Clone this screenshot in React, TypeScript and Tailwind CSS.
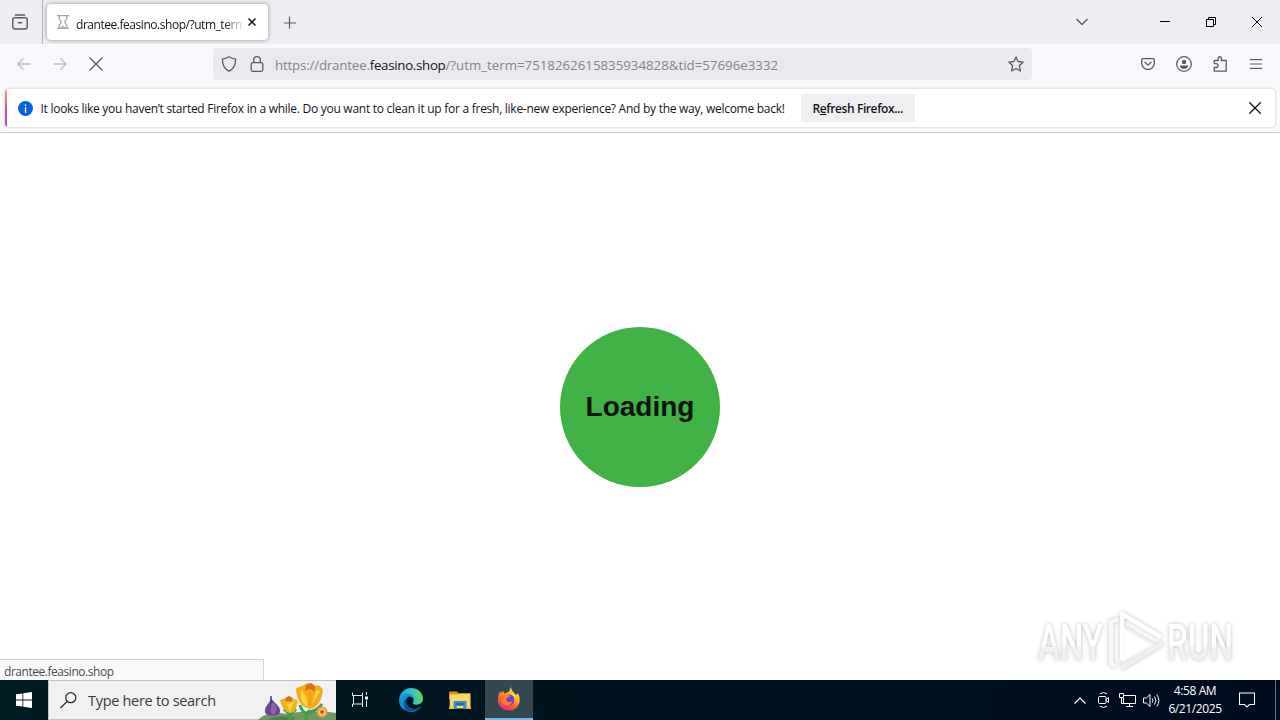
import type { ReactNode } from "react";

function IconButton({ children, className = "" }: { children: ReactNode; className?: string }) {
  return <button className={`flex h-8 w-9 items-center justify-center ${className}`}>{children}</button>;
}

function TabStrip() {
  return (
    <div className="flex h-11 shrink-0 items-center bg-[#eeedf2]">
      <div className="flex h-full w-[43px] items-center justify-center border-r border-[#b5b5bb] pr-0.5">
        <svg width="16" height="16" viewBox="0 0 16 16" fill="none" stroke="#5b5b66" strokeWidth="1.4" strokeLinecap="round">
          <path d="M3.2 1h9.6" />
          <rect x=".8" y="3.7" width="14.4" height="11.3" rx="2" />
          <path d="M6.3 8.7h3.4" />
        </svg>
      </div>
      <div className="ml-1 flex h-9 w-[221px] items-center rounded bg-white pl-2 shadow-[0_0_4px_rgba(0,0,0,0.4)]">
        <svg width="16" height="16" viewBox="0 0 16 16" fill="none" stroke="#a5a5a9" strokeWidth="1.3">
          <path d="M2 1.6h12M2 14.4h12M4.2 1.6v3.2L6.400 8l-2.200 3.200v3.200M11.800 1.600v3.200L9.600 8l2.200 3.200v3.200" />
          <path d="M5.500 14L8 12.500l2.500 1.500" />
        </svg>
        <div className="ml-[5px] w-[168px] overflow-hidden pt-px whitespace-nowrap [mask-image:linear-gradient(to_left,transparent,black_20px)]">
          <span className="text-[12px] tracking-[-0.46px] text-[#15141a]">drantee.feasino.shop/?utm_term=</span>
        </div>
        <svg className="ml-1" width="8" height="8" viewBox="0 0 8 8" stroke="#15141a" strokeWidth="1.5">
          <path d="M.5.5l7 7M7.5.5l-7 7" />
        </svg>
      </div>
      <svg className="ml-4" width="12" height="13" viewBox="0 0 12 13" stroke="#5b5b66" strokeWidth="1.2">
        <path d="M5.500.5v12M-.5 7h12.500" />
      </svg>
      <svg className="ml-auto" width="12" height="8" viewBox="0 0 12 8" fill="none" stroke="#5b5b66" strokeWidth="1.3">
        <path d="M.5 1L6 6.5 11.5 1" />
      </svg>
      <div className="ml-[54px] flex text-black">
        <div className="flex h-11 w-[46px] items-center justify-center">
          <svg width="10" height="10" viewBox="0 0 10 10" stroke="currentColor">
            <path d="M0 4.5h10" />
          </svg>
        </div>
        <div className="flex h-11 w-[46px] items-center justify-center">
          <svg width="10" height="10" viewBox="0 0 10 10" fill="none" stroke="currentColor">
            <path d="M.5 2.5h7v7h-7zM2.5 2.5v-2h7v7h-2" />
          </svg>
        </div>
        <div className="flex h-11 w-[46px] items-center justify-center">
          <svg width="10" height="10" viewBox="0 0 10 10" stroke="currentColor">
            <path d="M0 0l10 10M10 0L0 10" />
          </svg>
        </div>
      </div>
    </div>
  );
}

function NavBar() {
  return (
    <div className="flex h-10 shrink-0 items-center bg-[#f8f8fc] px-1.5">
      <IconButton>
        <svg width="14" height="12" viewBox="0 0 14 12" fill="none" stroke="#bdbdc2" strokeWidth="1.3" strokeLinecap="round" strokeLinejoin="round">
          <path d="M13.3 6H.8M6 .8L.8 6 6 11.2" />
        </svg>
      </IconButton>
      <IconButton>
        <svg width="14" height="12" viewBox="0 0 14 12" fill="none" stroke="#bdbdc2" strokeWidth="1.3" strokeLinecap="round" strokeLinejoin="round">
          <path d="M.7 6h12.5M8 .8L13.2 6 8 11.2" />
        </svg>
      </IconButton>
      <IconButton>
        <svg width="14" height="14" viewBox="0 0 14 14" stroke="#5b5b66" strokeWidth="1.25" strokeLinecap="round">
          <path d="M1 1l12 12M13 1L1 13" />
        </svg>
      </IconButton>
      <div className="ml-[99px] flex h-8 w-[819px] items-center rounded bg-[#eae9ee] px-2">
        <svg width="16" height="16" viewBox="0 0 16 16" fill="none" stroke="#5b5b66" strokeWidth="1.3" strokeLinejoin="round">
          <path d="M8 .8c2 1.3 4 2 6.6 2.3C14.7 9 12.6 13.2 8 15.2 3.4 13.2 1.3 9 1.4 3.1 4 2.8 6 2.1 8 .8z" />
        </svg>
        <svg className="ml-3" width="16" height="16" viewBox="0 0 16 16" fill="none" stroke="#5b5b66" strokeWidth="1.3">
          <rect x="2.2" y="6.7" width="11.6" height="8.6" rx="1.5" />
          <path d="M4.700 6.700V4a3.300 3.300 0 0 1 6.600 0v2.700" />
        </svg>
        <div className="ml-2.5 pt-0.5 text-[13.3px] leading-5 tracking-[-0.01px] whitespace-nowrap text-[#84848a]">
          <span className="tracking-[-0.18px]">https://drantee.</span>
          <span className="tracking-[-0.3px] text-[#15141a]">feasino.shop</span>
          /?utm_term=7518262615835934828&amp;tid=57696e3332
        </div>
        <svg className="ml-auto" width="16" height="16" viewBox="0 0 16 16" fill="none" stroke="#5b5b66" strokeWidth="1.3" strokeLinejoin="round">
          <path d="M8 .9l2.100 4.600 5.100.6-3.800 3.500 1 5.400L8 12.500l-4.400 2.500 1-5.400L.8 6.100l5.100-.6z" />
        </svg>
      </div>
      <div className="ml-auto flex">
        <IconButton>
          <svg width="14" height="12" viewBox="0 0 14 12" fill="none" stroke="#5b5b66" strokeWidth="1.3" strokeLinecap="round" strokeLinejoin="round">
            <path d="M2 .7h10a1.300 1.300 0 0 1 1.300 1.300v3.200a6.300 6.300 0 0 1-12.600 0V2A1.300 1.300 0 0 1 2 .7z" />
            <path d="M3.900 4.200L7 7.100l3.100-2.900" />
          </svg>
        </IconButton>
        <IconButton>
          <svg width="16" height="16" viewBox="0 0 16 16" fill="none" stroke="#5b5b66" strokeWidth="1.3">
            <circle cx="8" cy="8" r="7.3" />
            <circle cx="8" cy="6" r="2.2" fill="#5b5b66" stroke="none" />
            <path d="M3.700 9.600h8.600c-.2 2.100-2 3.400-4.300 3.400S3.900 11.700 3.700 9.600z" fill="#5b5b66" stroke="none" />
          </svg>
        </IconButton>
        <IconButton>
          <svg width="16" height="16" viewBox="0 0 16 16" fill="none" stroke="#5b5b66" strokeWidth="1.3" strokeLinejoin="round">
            <path d="M2.200 7.500V4.500h3.900V2.400a1.600 1.600 0 0 1 3.300 0v2.100h4.800v10.700H2.200v-3.700h1.900a1.900 1.900 0 0 0 0-3.800H2.200" />
          </svg>
        </IconButton>
        <IconButton>
          <svg width="12" height="10" viewBox="0 0 12 10" stroke="#5b5b66" strokeWidth="1.2">
            <path d="M0 .6h12M0 5h12M0 9.400h12" />
          </svg>
        </IconButton>
      </div>
    </div>
  );
}

function Notification() {
  return (
    <div className="h-[49px] shrink-0 border-b border-[#cccccf] bg-[#f9f9fb] pt-[5px] pr-[5px] pl-[5px]">
      <div className="flex h-[38px] overflow-hidden rounded bg-white shadow-[0_0_3px_rgba(0,0,0,0.22)]">
        <div className="w-0.5 bg-linear-to-b from-[#f7a05c] via-[#d05595] to-[#9454c5]" />
        <div className="flex flex-1 items-center pr-3.5 pl-[11px]">
          <svg width="15" height="15" viewBox="0 0 16 16">
            <circle cx="8" cy="8" r="8" fill="#0561e0" />
            <path d="M8 7v5" stroke="white" strokeWidth="1.4" strokeLinecap="round" />
            <circle cx="8" cy="4.3" r=".9" fill="white" />
          </svg>
          <span className="ml-[7.5px] pt-0.5 text-[12px] tracking-[-0.267px] whitespace-nowrap text-[#15141a]">
            It looks like you haven’t started Firefox in a while. Do you want to clean it up for a fresh, like-new experience? And by the way, welcome back!
          </span>
          <button className="ml-4 h-7 w-[114px] rounded-xs bg-[#efeef1] pt-0.5 text-[12px] font-semibold tracking-[-0.4px] whitespace-nowrap text-[#15141a]">
            R<span className="underline underline-offset-1">e</span>fresh Firefox...
          </button>
          <svg className="ml-auto" width="12" height="12" viewBox="0 0 12 12" stroke="#15141a" strokeWidth="1.3">
            <path d="M.3.3l11.400 11.400M11.700.3L.3 11.700" />
          </svg>
        </div>
      </div>
    </div>
  );
}

function Watermark() {
  return (
    <svg
      className="absolute right-10 bottom-1.5 drop-shadow-[0_0_2px_rgba(0,0,0,0.26)]"
      width="206"
      height="66"
      viewBox="0 0 206 66"
    >
      <defs>
        <linearGradient id="mark" x1="0" y1="0" x2="0" y2="1">
          <stop offset=".52" stopColor="#ffffff" />
          <stop offset=".6" stopColor="#f0f0f0" />
        </linearGradient>
      </defs>
      <g fill="url(#mark)" fontFamily="Roboto, sans-serif" fontSize="50" fontWeight="500">
        <text x="4" y="52" textLength="65" lengthAdjust="spacingAndGlyphs">ANY</text>
        <text x="133" y="52" textLength="66" lengthAdjust="spacingAndGlyphs">RUN</text>
      </g>
      <g fill="none" strokeWidth="4.5" strokeLinejoin="round">
        <path d="M84 11l-7 3v41l5 4" stroke="#f7f7f7" />
        <path d="M127 36L89 59" stroke="#eeeeee" strokeLinecap="round" />
        <path d="M89 19l31 18-31 17z" fill="#ffffff" stroke="#f1f1f1" strokeWidth="3" />
        <path d="M88 52V6l39 23" stroke="#ffffff" />
      </g>
    </svg>
  );
}

function Page() {
  return (
    <div className="relative flex flex-1 items-center justify-center bg-white">
      <div className="flex size-40 items-center justify-center rounded-full bg-[#41b246] font-['Liberation_Sans',Arial,sans-serif] text-[28px] leading-none font-bold text-[#10130f]">
        Loading
      </div>
      <div className="absolute bottom-0 left-0 h-[21px] w-[264px] border-t border-r border-[#d4d4d7] bg-[#f9f9fb] pl-1 text-[12px] leading-[23px] tracking-[-0.46px] text-[#4b4b52]">
        drantee.feasino.shop
      </div>
      <Watermark />
    </div>
  );
}

function Flowers() {
  return (
    <svg className="ml-auto" width="80" height="39" viewBox="0 0 80 39">
      <path d="M2 39c7-8 20-8 29-6 14-3 34-3 49-1v7z" fill="#6f9864" />
      <path d="M11 39c8-5 20-4 29-2l-3 2z" fill="#4d8250" />
      <path d="M15 17c-1 6-7 8-6 14 1 5 13 5 15 0 1-6-6-9-9-14z" fill="#6d4590" />
      <path d="M17 21c-3 6-3 10 0 13 4-3 5-8 0-13z" fill="#8d64ab" />
      <path d="M15 15v7" stroke="#53416c" strokeWidth="1.5" />
      <path d="M34 31v8M28 28l6 6 6-6M54 29c-3 3-4 6-4 10M44 24c2 8 8 10 10 7 7-2 10-5 12-8" stroke="#3c9e48" strokeWidth="3" fill="none" />
      <path d="M24 19c3-2 5 0 6-2 3-3 5-1 6 2 3-2 4-1 6 1-2 8-3 12-8 12-5-1-8-5-10-13z" fill="#f3b11c" />
      <path d="M34 19l4 1-4 11-4-9z" fill="#ffd33c" />
      <path d="M29 17l4-2 4 2-1 4-6-1z" fill="#dc7214" />
      <path d="M40 8c2-3 6-2 8-4 3-3 9-2 11 1 4-2 6 1 8 4-1 8-4 17-12 19C46 27 41 20 40 8z" fill="#f3ad1c" />
      <path d="M45 8c4 5 6 10 7 18-6-3-8-9-7-18zM60 9l4 1-8 14z" fill="#ffd33a" />
      <path d="M50 4l5-2 4 3v6l-5-3-5 2z" fill="#dc7214" />
      <path d="M54 11v14" stroke="#e2980f" />
      <circle cx="66" cy="31" r="5.500" fill="#e89b3d" />
      <circle cx="66" cy="31" r="4" fill="#f9bd5e" />
      <circle cx="66" cy="31" r="1.800" fill="#b0541d" />
    </svg>
  );
}

function EdgeIcon() {
  return (
    <svg width="24" height="24" viewBox="0 0 24 24">
      <defs>
        <linearGradient id="edgeTop" x1="0" y1=".5" x2="1" y2=".4">
          <stop stopColor="#199be2" />
          <stop offset=".5" stopColor="#2fc2d2" />
          <stop offset="1" stopColor="#65db57" />
        </linearGradient>
        <linearGradient id="edgeLow" x1="0" y1="0" x2="1" y2="1">
          <stop stopColor="#1aa0e3" />
          <stop offset="1" stopColor="#0b62bb" />
        </linearGradient>
      </defs>
      <path d="M.1 12C.5 5 5.500 0 12 0c7 0 12 5 12 10.500 0 4-3 6.200-6.500 6.200-3 0-4-1.200-3.500-2.200 1.800-2.800 0-6.300-4-6.300-4 0-8 1.800-9.900 3.800z" fill="url(#edgeTop)" />
      <path d="M.1 12C1 8 4 5.700 8 5.700c5 0 7.500 3.200 7.200 6.300-.8-2.600-3-3.700-5-3.700-3 2-3.700 5-2.500 8 2.200 5 9 6.500 14.700 2.200C20.500 22 16.500 24 12 24 5.500 24-.4 19 .1 12z" fill="url(#edgeLow)" />
      <path d="M10.200 8.300c-3 2-4 5-2.700 8.300 2.300 5 9 6.200 14.900 1.900-4 5-10 5.500-14 4.300C3.500 19 4 10.500 10.200 8.300z" fill="#0d4d94" />
    </svg>
  );
}

function ExplorerIcon() {
  return (
    <svg width="22" height="19" viewBox="0 0 22 19">
      <path d="M0 1.500Q0 .5 1 .5h7l2 2h11v6H0z" fill="#dd9517" />
      <path d="M1 3.500h8l2-1h10.500v15H.5z" fill="#fbd765" />
      <path d="M4.500 18v-7q0-1 1-1h11q1 0 1 1v7h-3.200v-3H7.700v3z" fill="#3c8bd0" />
      <path d="M7 12h8v2H7z" fill="#236caf" />
      <path d="M0 16h5v2H0zM17.500 16H22v2h-4.500z" fill="#efbd47" />
    </svg>
  );
}

function FirefoxIcon() {
  return (
    <svg width="24" height="24" viewBox="0 0 24 24">
      <defs>
        <linearGradient id="fox" x1=".8" y1="0" x2=".2" y2="1">
          <stop stopColor="#fff04b" />
          <stop offset=".35" stopColor="#ffb325" />
          <stop offset=".65" stopColor="#ff563b" />
          <stop offset="1" stopColor="#e9247f" />
        </linearGradient>
      </defs>
      <path d="M14.500 0c-1 4 3 4.500 3.500 8L21 6.500c2 3.500 2.300 7.500.7 11C19.800 21.500 16 23.600 12 23.600 5.800 23.600.8 18.500.8 12.500c0-4 1.200-6.800 2.700-8.500l.3 2.500L6 4l1.300 2.500C10 6 11.500 5.500 12.500 3.500 13 2 13.700.8 14.500 0z" fill="url(#fox)" />
      <circle cx="12.3" cy="12.7" r="5.2" fill="#713bd1" />
      <path d="M5.500 8c3-1.300 5 .2 8 .7-1 1.800-4 1.500-4.300 3.800.5 3 4.700 3.500 6.600 1-1 6-9.800 6.700-11.800.5z" fill="#ff7d24" />
      <path d="M14 7c3 1.500 4 4 3.400 6.800 2-2.300 1.700-6-.7-8.300z" fill="#ffd438" />
    </svg>
  );
}

function Taskbar() {
  return (
    <div className="flex h-10 shrink-0 items-center bg-linear-to-r from-[#001a21] via-[#00131e] to-[#000b20] text-white">
      <div className="flex h-full w-12 items-center justify-center">
        <svg width="16" height="16" viewBox="0 0 16 16" fill="white">
          <path d="M0 2.300l6.500-.9v6.200H0zM7.300 1.300L16 0v7.600H7.300zM0 8.400h6.500v6.200L0 13.700zM7.300 8.400H16V16l-8.700-1.300z" />
        </svg>
      </div>
      <div className="flex h-full w-72 items-center border border-r-0 border-[#bfc1c2] bg-[#f1f1f2]">
        <svg className="ml-[11px]" width="17" height="17" viewBox="0 0 17 17" fill="none" stroke="#222" strokeWidth="1.2">
          <circle cx="10.8" cy="5.7" r="5" />
          <path d="M7.2 9.300L.5 16" />
        </svg>
        <span className="ml-[11px] pt-px text-[14.5px] tracking-[-0.3px] whitespace-nowrap text-[#3b3b3c]">Type here to search</span>
        <Flowers />
      </div>
      <div className="flex h-full w-12 items-center justify-center">
        <svg width="16" height="16" viewBox="0 0 16 16" fill="none" stroke="#e9edef">
          <path d="M.5.500v3h10v-3M.5 15v-3h10v3M1.500 3.500v8.500M10.500 3.500v8.500M14.500 0v3M14.500 8.500v6.500" />
          <path d="M13 4.500h3v3h-3z" fill="white" stroke="none" />
        </svg>
      </div>
      <div className="flex h-full w-[54px] items-center justify-center">
        <EdgeIcon />
      </div>
      <div className="flex h-full w-[44px] items-center justify-center">
        <ExplorerIcon />
      </div>
      <div className="ml-[3px] flex h-full w-12 items-center justify-center border-b-2 border-[#76b9ed] bg-[#334850]">
        <FirefoxIcon />
      </div>
      <div className="ml-auto flex h-full items-center">
        <svg width="12" height="7" viewBox="0 0 12 7" fill="none" stroke="white" strokeWidth="1.2">
          <path d="M.5 6.500L6 1l5.500 5.500" />
        </svg>
        <svg className="ml-3" width="12" height="16" viewBox="0 0 12 16" fill="none" stroke="white">
          <path d="M2 1.800Q5.500-.8 9 1.800M2 14.200q3.500 2.600 7 0" />
          <rect x=".5" y="4.500" width="7.500" height="7" rx="1" />
          <path d="M8 7.500l2.500-2v5L8 8.500" />
        </svg>
        <svg className="ml-[9px]" width="17" height="14" viewBox="0 0 17 14" fill="none" stroke="white">
          <path d="M5 2.500h11.500v8H4.500V5M7 13.500h7M10.500 10.500v3M.5.500h4v4h-4zM2.500 4.500v6h2" />
        </svg>
        <svg className="ml-[7px]" width="17" height="15" viewBox="0 0 17 15" fill="none" stroke="white">
          <path d="M.5 5h2.800L7 1.500v12L3.300 10H.5zM9.200 5.300q1.500 2.200 0 4.400M11.500 3.500q3 4 0 8M13.800 1.500q4.200 6 0 12" />
        </svg>
        <div className="ml-[7px] w-[56px] text-center text-[12px] leading-[18px] tracking-[-0.4px] whitespace-nowrap">
          <div>4:58 AM</div>
          <div>6/21/2025</div>
        </div>
        <svg className="ml-[16px]" width="16" height="16" viewBox="0 0 16 16" fill="none" stroke="white" strokeWidth="1.1">
          <path d="M.5 1h15v11.500h-5L8 15l-2.500-2.500h-5z" />
        </svg>
        <div className="ml-5 h-full w-[5px] border-l border-[#6d737d]" />
      </div>
    </div>
  );
}

export default function App() {
  return (
    <div className="flex h-[720px] w-[1280px] flex-col overflow-hidden font-['Open_Sans','Noto_Sans',sans-serif]">
      <TabStrip />
      <NavBar />
      <Notification />
      <Page />
      <Taskbar />
    </div>
  );
}
